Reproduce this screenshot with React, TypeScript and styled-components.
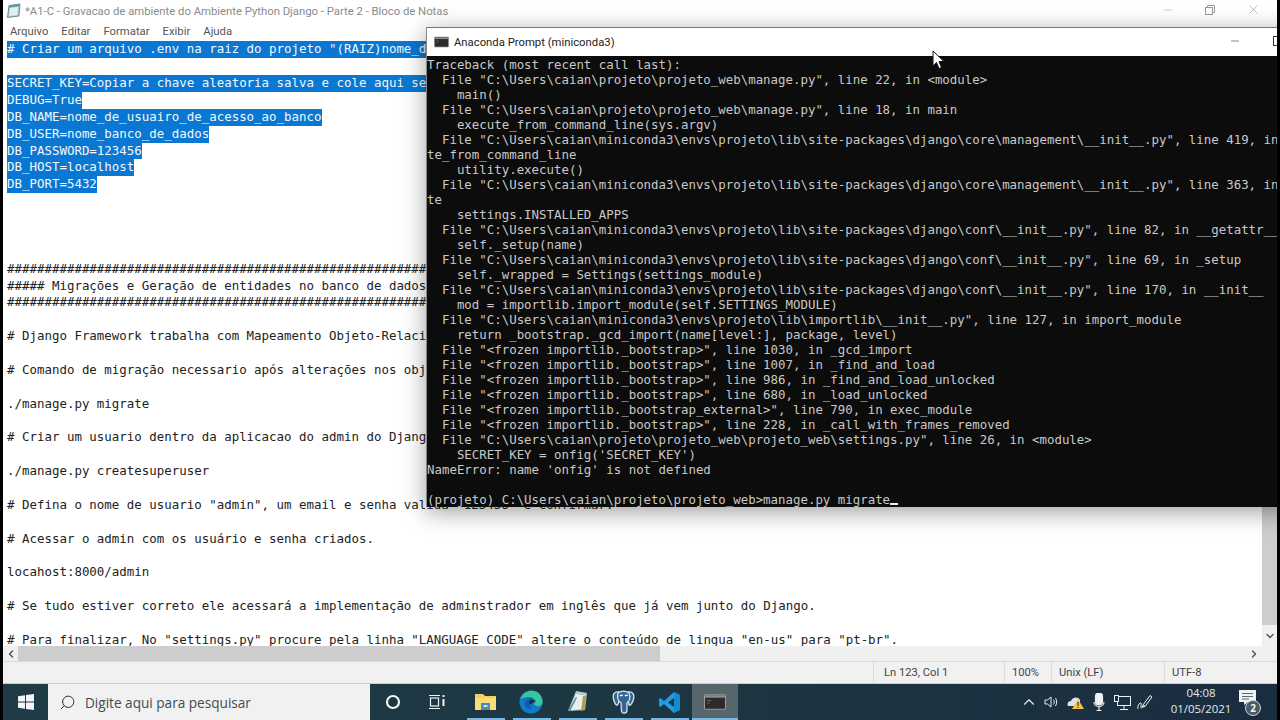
import React from 'react';
import styled, { createGlobalStyle } from 'styled-components';
import { ChevronUp, ChevronDown, ChevronLeft, ChevronRight, Search, Minus, X } from 'lucide-react';

const Global = createGlobalStyle`
  html, body { margin: 0; padding: 0; width: 1280px; height: 720px; overflow: hidden; background: #000; }
  #root { width: 1280px; height: 720px; }
`;

const uiFont = `"Roboto", "Open Sans", sans-serif`;
const barFont = `"Open Sans", "Noto Sans", sans-serif`;
const monoFont = `"DejaVu Sans Mono", "Liberation Mono", monospace`;

const Screen = styled.div`
  position: relative;
  width: 1280px;
  height: 720px;
  overflow: hidden;
  background: #000;
  display: flex;
  flex-direction: column;
`;
const Notepad = styled.section`
  flex: 1;
  min-height: 0;
  margin: 0 3px;
  background: #fff;
  display: flex;
  flex-direction: column;
  font-family: ${uiFont};
`;
const TitleBar = styled.header`
  height: 22px;
  display: flex;
  align-items: center;
  padding-left: 3px;
  gap: 3px;
  font-size: 11.3px;
  color: #8b8b8b;
  white-space: nowrap;
`;
const WinButtons = styled.div`
  margin-left: auto;
  display: flex;
  align-items: center;
  gap: 30px;
  padding: 0 16px 3px 0;
  color: #9a9a9a;
`;
const MenuBar = styled.nav`
  height: 19px;
  display: flex;
  align-items: center;
  padding-left: 7px;
  gap: 13px;
  font-size: 11.3px;
  color: #555;
`;
const Middle = styled.div`
  flex: 1;
  min-height: 0;
  display: flex;
`;
const TextArea = styled.div`
  flex: 1;
  min-width: 0;
  overflow: hidden;
  padding: 0.3px 0 0 4px;
  font-family: ${monoFont};
  font-size: 12.44px;
  line-height: 16.88px;
  color: #222;
  white-space: pre;
`;
const Line = styled.div`
  height: 16.88px;
`;
const Selected = styled.span`
  display: inline-block;
  height: 16.88px;
  background: #0a78d2;
  color: #f2f7fc;
`;
const VScroll = styled.div`
  width: 15px;
  background: #f0f0f0;
  display: flex;
  flex-direction: column;
  align-items: center;
  color: #555;
`;
const VThumb = styled.div`
  width: 100%;
  height: 300px;
  margin-top: auto;
  background: #cdcdcd;
`;
const ArrowSlot = styled.div`
  height: 21px;
  display: flex;
  align-items: center;
  justify-content: center;
`;
const HScroll = styled.div`
  height: 15px;
  background: #f0f0f0;
  display: flex;
  align-items: center;
  color: #555;
`;
const HThumb = styled.div`
  width: 642px;
  height: 100%;
  background: #cdcdcd;
`;
const HArrow = styled.div`
  width: 15px;
  display: flex;
  justify-content: center;
`;
const HRight = styled(HArrow)`
  margin-left: auto;
  margin-right: 16px;
`;
const StatusBar = styled.footer`
  height: 21px;
  flex: none;
  border-top: 1px solid #d9d9d9;
  background: #f1f1f1;
  display: flex;
  justify-content: flex-end;
  font-size: 11.2px;
  color: #444;
`;
const StatusCell = styled.div<{ $w: number; $pad?: number }>`
  width: ${p => p.$w}px;
  box-sizing: border-box;
  padding-left: ${p => p.$pad ?? 7}px;
  border-left: 1px solid #dcdcdc;
  display: flex;
  align-items: center;
  white-space: nowrap;
`;

const Terminal = styled.section`
  position: absolute;
  left: 426px;
  top: 27px;
  width: 880px;
  height: 480px;
  background: #0c0c0c;
  border-top: 1px solid #777;
  border-left: 1px solid #888;
  box-sizing: border-box;
  box-shadow: 0 5px 22px rgba(0, 0, 0, 0.38);
  display: flex;
  flex-direction: column;
`;
const TermTitle = styled.header`
  height: 28px;
  flex: none;
  background: #fff;
  display: flex;
  align-items: center;
  padding-left: 7px;
  gap: 5px;
  font-family: ${uiFont};
  font-size: 11.3px;
  color: #222;
`;
const TermButtons = styled.div`
  position: absolute;
  left: 802px;
  top: 7px;
  display: flex;
  align-items: center;
  gap: 32px;
  color: #333;
`;
const MaxBox = styled.div`
  width: 8px;
  height: 8px;
  border: 1px solid #333;
`;
const TermBody = styled.div`
  flex: 1;
  padding-top: 1px;
  overflow: hidden;
  font-family: ${monoFont};
  font-size: 12.42px;
  line-height: 15px;
  color: #c9c9c9;
  white-space: pre;
`;
const TermLine = styled.div`
  height: 15px;
  overflow: visible;
`;
const Caret = styled.span`
  display: inline-block;
  width: 7.5px;
  height: 2px;
  background: #eee;
  vertical-align: -1px;
`;
const PillarRight = styled.div`
  position: absolute;
  right: 0;
  top: 0;
  width: 3px;
  height: 720px;
  background: #000;
`;
const Cursor = styled.svg`
  position: absolute;
  left: 932px;
  top: 50px;
`;

const Taskbar = styled.footer`
  height: 37px;
  flex: none;
  margin-left: 3px;
  border-top: 1px solid #c9cdd0;
  box-sizing: border-box;
  background: linear-gradient(90deg, #1e3b46 0%, #1d3742 50%, #1a2d40 100%);
  display: flex;
  align-items: stretch;
  font-family: ${barFont};
  color: #e6eaec;
`;
const Start = styled.div`
  width: 45px;
  display: flex;
  align-items: center;
  justify-content: center;
`;
const SearchBox = styled.div`
  width: 322px;
  background: #f1f1f1;
  display: flex;
  align-items: center;
  padding-left: 11px;
  gap: 9px;
  box-sizing: border-box;
  font-size: 13.6px;
  color: #3f4c55;
`;
const FlippedSearch = styled(Search)`
  transform: scaleX(-1);
`;
const TaskSlot = styled.div<{ $active?: boolean; $running?: boolean }>`
  position: relative;
  width: 46px;
  display: flex;
  align-items: center;
  justify-content: center;
  background: ${p => (p.$active ? '#56666c' : 'transparent')};
  &::after {
    content: '';
    display: ${p => (p.$running ? 'block' : 'none')};
    position: absolute;
    bottom: 0;
    left: ${p => (p.$active ? '0' : '5px')};
    right: ${p => (p.$active ? '0' : '3px')};
    height: 2px;
    background: #76b9e4;
  }
`;
const TaskView = styled.svg`
  margin-left: -4px;
`;
const Tray = styled.div`
  margin-left: auto;
  display: flex;
  align-items: center;
`;
const TrayIcon = styled.div`
  width: 23.3px;
  display: flex;
  align-items: center;
  justify-content: center;
`;
const Clock = styled.div`
  width: 76px;
  margin: -2px 0 0 6px;
  text-align: center;
  font-size: 11.4px;
  line-height: 16px;
`;
const Notif = styled.div`
  position: relative;
  width: 41px;
  height: 100%;
  box-sizing: border-box;
  padding-top: 6px;
  display: flex;
  align-items: flex-start;
  justify-content: flex-start;
`;
const Badge = styled.span`
  position: absolute;
  left: 6px;
  top: 16px;
  width: 16px;
  height: 16px;
  border-radius: 50%;
  background: #4b5b66;
  border: 1px solid #cfd4d7;
  box-sizing: border-box;
  font-size: 10px;
  font-weight: 700;
  line-height: 14px;
  text-align: center;
  color: #f2f2f2;
`;

type NoteLine = { t?: string; s?: boolean };
const H = '#'.repeat(120);
const noteLines: NoteLine[] = [
  { t: '# Criar um arquivo .env na raiz do projeto "(RAIZ)nome_do_projeto"', s: true },
  {},
  { t: 'SECRET_KEY=Copiar a chave aleatoria salva e cole aqui sem aspas', s: true },
  { t: 'DEBUG=True', s: true },
  { t: 'DB_NAME=nome_de_usuairo_de_acesso_ao_banco', s: true },
  { t: 'DB_USER=nome_banco_de_dados', s: true },
  { t: 'DB_PASSWORD=123456', s: true },
  { t: 'DB_HOST=localhost', s: true },
  { t: 'DB_PORT=5432', s: true },
  {}, {}, {}, {},
  { t: H },
  { t: '##### Migrações e Geração de entidades no banco de dados #####' },
  { t: H },
  {},
  { t: '# Django Framework trabalha com Mapeamento Objeto-Relacional (ORM).' },
  {},
  { t: '# Comando de migração necessario após alterações nos objetos' },
  {},
  { t: './manage.py migrate' },
  {},
  { t: '# Criar um usuario dentro da aplicacao do admin do Django' },
  {},
  { t: './manage.py createsuperuser' },
  {},
  { t: '# Defina o nome de usuario "admin", um email e senha valida "123456" e confirmar.' },
  {},
  { t: '# Acessar o admin com os usuário e senha criados.' },
  {},
  { t: 'locahost:8000/admin' },
  {},
  { t: '# Se tudo estiver correto ele acessará a implementação de adminstrador em inglês que já vem junto do Django.' },
  {},
  { t: '# Para finalizar, No "settings.py" procure pela linha "LANGUAGE_CODE" altere o conteúdo de lingua "en-us" para "pt-br".' },
];

const termLines = [
  'Traceback (most recent call last):',
  '  File "C:\\Users\\caian\\projeto\\projeto_web\\manage.py", line 22, in <module>',
  '    main()',
  '  File "C:\\Users\\caian\\projeto\\projeto_web\\manage.py", line 18, in main',
  '    execute_from_command_line(sys.argv)',
  '  File "C:\\Users\\caian\\miniconda3\\envs\\projeto\\lib\\site-packages\\django\\core\\management\\__init__.py", line 419, in execu',
  'te_from_command_line',
  '    utility.execute()',
  '  File "C:\\Users\\caian\\miniconda3\\envs\\projeto\\lib\\site-packages\\django\\core\\management\\__init__.py", line 363, in execu',
  'te',
  '    settings.INSTALLED_APPS',
  '  File "C:\\Users\\caian\\miniconda3\\envs\\projeto\\lib\\site-packages\\django\\conf\\__init__.py", line 82, in __getattr__',
  '    self._setup(name)',
  '  File "C:\\Users\\caian\\miniconda3\\envs\\projeto\\lib\\site-packages\\django\\conf\\__init__.py", line 69, in _setup',
  '    self._wrapped = Settings(settings_module)',
  '  File "C:\\Users\\caian\\miniconda3\\envs\\projeto\\lib\\site-packages\\django\\conf\\__init__.py", line 170, in __init__',
  '    mod = importlib.import_module(self.SETTINGS_MODULE)',
  '  File "C:\\Users\\caian\\miniconda3\\envs\\projeto\\lib\\importlib\\__init__.py", line 127, in import_module',
  '    return _bootstrap._gcd_import(name[level:], package, level)',
  '  File "<frozen importlib._bootstrap>", line 1030, in _gcd_import',
  '  File "<frozen importlib._bootstrap>", line 1007, in _find_and_load',
  '  File "<frozen importlib._bootstrap>", line 986, in _find_and_load_unlocked',
  '  File "<frozen importlib._bootstrap>", line 680, in _load_unlocked',
  '  File "<frozen importlib._bootstrap_external>", line 790, in exec_module',
  '  File "<frozen importlib._bootstrap>", line 228, in _call_with_frames_removed',
  '  File "C:\\Users\\caian\\projeto\\projeto_web\\projeto_web\\settings.py", line 26, in <module>',
  "    SECRET_KEY = onfig('SECRET_KEY')",
  "NameError: name 'onfig' is not defined",
  '',
];

const NotepadIcon = ({ size = 16 }: { size?: number }) => (
  <svg width={size} height={size} viewBox="0 0 16 16">
    <path d="M3 2.5 L14 1 L13 13 L1.5 14.5 Z" fill="#a9ccd3" stroke="#58757c" strokeWidth="0.8" />
    <path d="M4 5 L12 4 L11.3 12 L3 13 Z" fill="#e3f0f1" />
    <path d="M3 2.5 L14 1 L13.8 3.2 L2.8 4.6 Z" fill="#5f9aa8" />
  </svg>
);
const ConsoleIcon = ({ w = 15, h = 12 }: { w?: number; h?: number }) => (
  <svg width={w} height={h} viewBox="0 0 21 15">
    <rect x="0.5" y="0.5" width="20" height="14" rx="1" fill="#2b2b2b" stroke="#9a9a9a" />
    <rect x="1" y="1" width="19" height="2.4" fill="#8c8c8c" />
    <path d="M3 6 L7 6 M3 8.5 L5.5 8.5" stroke="#666" strokeWidth="1" />
  </svg>
);

export default function App() {
  return (
    <Screen>
      <Global />
      <Notepad>
        <TitleBar>
          <NotepadIcon />
          <span>*A1-C - Gravacao de ambiente do Ambiente Python Django - Parte 2 - Bloco de Notas</span>
          <WinButtons>
            <Minus size={12} strokeWidth={1} />
            <svg width="12" height="12" viewBox="0 0 12 12" fill="none" stroke="currentColor">
              <rect x="1.5" y="3.5" width="7" height="7" />
              <path d="M3.5 3.5 V1.5 H10.5 V8.5 H8.5" />
            </svg>
            <X size={15} strokeWidth={1} />
          </WinButtons>
        </TitleBar>
        <MenuBar>
          <span>Arquivo</span>
          <span>Editar</span>
          <span>Formatar</span>
          <span>Exibir</span>
          <span>Ajuda</span>
        </MenuBar>
        <Middle>
          <TextArea>
            {noteLines.map((l, i) => (
              <Line key={i}>{l.s ? <Selected>{l.t}</Selected> : l.t}</Line>
            ))}
          </TextArea>
          <VScroll>
            <VThumb />
            <ArrowSlot>
              <ChevronDown size={12} strokeWidth={3} />
            </ArrowSlot>
          </VScroll>
        </Middle>
        <HScroll>
          <HArrow>
            <ChevronLeft size={12} strokeWidth={3} />
          </HArrow>
          <HThumb />
          <HRight>
            <ChevronRight size={12} strokeWidth={3} />
          </HRight>
        </HScroll>
        <StatusBar>
          <StatusCell $w={131} $pad={10}>Ln 123, Col 1</StatusCell>
          <StatusCell $w={47}>100%</StatusCell>
          <StatusCell $w={113}>Unix (LF)</StatusCell>
          <StatusCell $w={113}>UTF-8</StatusCell>
        </StatusBar>
      </Notepad>

      <Taskbar>
        <Start>
          <svg width="16" height="16" viewBox="0 0 16 16" fill="#f4f6f7">
            <path d="M0 2.2 L7 1.2 V7.5 H0 Z M8 1 L16 0 V7.5 H8 Z M0 8.5 H7 V14.8 L0 13.8 Z M8 8.5 H16 V16 L8 15 Z" />
          </svg>
        </Start>
        <SearchBox>
          <FlippedSearch size={17} strokeWidth={1.4} color="#333" />
          <span>Digite aqui para pesquisar</span>
        </SearchBox>
        <TaskSlot>
          <svg width="16" height="16" viewBox="0 0 16 16" fill="none" stroke="#f2f4f5" strokeWidth="2.2">
            <circle cx="8" cy="8" r="6" />
          </svg>
        </TaskSlot>
        <TaskSlot>
          <TaskView width="17" height="16" viewBox="0 0 17 16" fill="none" stroke="#eef1f2" strokeWidth="1.2">
            <path d="M0 1.5 H11 M0 14.5 H11" />
            <rect x="1.5" y="4" width="8" height="8" />
            <path d="M14.5 1 V3 M14.5 5 V12" strokeWidth="2" />
          </TaskView>
        </TaskSlot>
        <TaskSlot $running>
          <svg width="21" height="18" viewBox="0 0 21 18">
            <path d="M0 1 H8 L10 3 H21 V17 H0 Z" fill="#f5cf5a" />
            <path d="M0 5 H21 V17 H0 Z" fill="#f9dd7a" />
            <path d="M6 10 H15 V17 H6 Z" fill="#3f8ec9" />
            <path d="M8.5 12 H12.5 V14 H8.5 Z" fill="#f9dd7a" />
          </svg>
        </TaskSlot>
        <TaskSlot $running>
          <svg width="24" height="24" viewBox="0 0 24 24">
            <circle cx="12" cy="12" r="11.5" fill="#1478c8" />
            <path d="M1 10 C3 2 11 0 15 1 C21 2 24 8 23.5 13 C23 17 16 17 15 14 C18 12 15 7 10 7 C6 7 2 8 1 10 Z" fill="#35c89b" />
            <path d="M6 14 C6 9 12 7 15 9 C10 10 10 16 13 19 C9 19 6 17 6 14 Z" fill="#0d5ca8" />
            <path d="M10 13 C10 9 16 9 17 12 C14 11 13 13 13 15 Z" fill="#1d2f3a" />
          </svg>
        </TaskSlot>
        <TaskSlot $running>
          <svg width="22" height="24" viewBox="0 0 22 24">
            <path d="M10 1 L21 3 L19 20 L2 21 Z" fill="#aecfcf" />
            <path d="M10 4 L19 5.5 L17.5 19 L5 20 Z" fill="#e6f0ee" />
            <path d="M17 6 L20 6 L18.5 20 L15 21 Z" fill="#b39a57" />
            <path d="M2 21 L10 7 L11 8 L4 21 Z" fill="#5f8f8c" />
          </svg>
        </TaskSlot>
        <TaskSlot $running>
          <svg width="23" height="25" viewBox="0 0 23 25" fill="none" stroke="#d6e4ec" strokeWidth="1.3">
            <path d="M7 2 C2 1 0.5 5 1.5 9 C2.5 13 4 16 5.5 15 C6.5 14 6.5 12 7 11" fill="#336791" />
            <path d="M16 2 C21 1 22.5 5 21.5 9 C20.5 13 18.5 16 17 15 L16.5 12" fill="#336791" />
            <path d="M6 3 C9 0.5 14 0.5 17 3 C18.5 7 17.5 11 15 13 L15 20 C15 24 10 24 9.5 21 L9 13 C6 11 5 7 6 3 Z" fill="#336791" />
            <path d="M8 6 C9 5 10 5 10.5 6 M13 6 C14 5 15 5 15.5 6" stroke="#fff" />
          </svg>
        </TaskSlot>
        <TaskSlot $running>
          <svg width="23" height="23" viewBox="0 0 23 23">
            <path d="M16 1 L22 4 V19 L16 22 L6 13 L2.5 16 L1 15 V8 L2.5 7 L6 10 Z M16 7 L10 11.5 L16 16 Z" fill="#1f9ce6" fillRule="evenodd" />
            <path d="M16 1 L22 4 V19 L16 22 Z" fill="#1481c8" opacity="0.7" />
          </svg>
        </TaskSlot>
        <TaskSlot $active $running>
          <ConsoleIcon w={22} h={16} />
        </TaskSlot>
        <Tray>
          <TrayIcon>
            <ChevronUp size={18} strokeWidth={1.5} />
          </TrayIcon>
          <TrayIcon>
            <svg width="16" height="14" viewBox="0 0 16 14" fill="none" stroke="#e8ecee" strokeWidth="1">
              <path d="M1 5 H3.5 L7 2 V12 L3.5 9 H1 Z" />
              <path d="M9.5 4.5 C10.5 6 10.5 8 9.5 9.5 M11.5 3 C13 5.5 13 8.5 11.5 11" />
            </svg>
          </TrayIcon>
          <TrayIcon>
            <svg width="17" height="14" viewBox="0 0 17 14">
              <path d="M1 11 C-0.5 8 2 5.5 4 6 C5 2 11 1 13 5 L13 11 Z" fill="#dfe3e5" />
              <path d="M11 4 L17 14 H5 Z" fill="#f1c24b" />
              <path d="M11 7 V11 M11 12 V13" stroke="#333" strokeWidth="1.1" />
            </svg>
          </TrayIcon>
          <TrayIcon>
            <svg width="12" height="18" viewBox="0 0 12 18" fill="none" stroke="#eef0f1" strokeWidth="1.2">
              <rect x="2.5" y="0" width="7" height="12" rx="3.5" fill="#eef0f1" />
              <path d="M1 9 C1 15 11 15 11 9 M6 14 V17 M3.5 17.5 H8.5" />
            </svg>
          </TrayIcon>
          <TrayIcon>
            <svg width="17" height="15" viewBox="0 0 17 15" fill="none" stroke="#eef0f1" strokeWidth="1">
              <rect x="3.5" y="1.5" width="13" height="9" />
              <rect x="0.5" y="0.5" width="4" height="6" fill="#1a2d40" />
              <path d="M10 11 V14 M6 14.5 H14" />
            </svg>
          </TrayIcon>
          <TrayIcon>
            <svg width="16" height="16" viewBox="0 0 16 16" fill="none" stroke="#eef0f1" strokeWidth="1">
              <path d="M6 11 L13 1.5 L15 3 L8 12.5 L5.5 13 Z" />
              <path d="M1 15 C0 12 3 8 4 9 C5 10 3 14 4.5 14 C6 14 6 11 8 12" />
            </svg>
          </TrayIcon>
          <Clock>
            04:08
            <br />
            01/05/2021
          </Clock>
          <Notif>
            <svg width="17" height="15" viewBox="0 0 17 15" fill="#eef0f1">
              <path d="M0 0 H17 V12 H9 L5 15 V12 H0 Z" />
              <path d="M3 3.5 H14 M3 6.5 H14 M3 9 H10" stroke="#5a6872" strokeWidth="1" />
            </svg>
            <Badge>2</Badge>
          </Notif>
        </Tray>
      </Taskbar>

      <Terminal>
        <TermTitle>
          <ConsoleIcon />
          <span>Anaconda Prompt (miniconda3)</span>
          <TermButtons>
            <Minus size={12} strokeWidth={1.2} />
            <MaxBox />
          </TermButtons>
        </TermTitle>
        <TermBody>
          {termLines.map((l, i) => (
            <TermLine key={i}>{l}</TermLine>
          ))}
          <TermLine>
            {'(projeto) C:\\Users\\caian\\projeto\\projeto_web>manage.py migrate'}
            <Caret />
          </TermLine>
        </TermBody>
      </Terminal>
      <PillarRight />
      <Cursor width="14" height="20" viewBox="0 0 14 20">
        <path d="M1 1 L1 16 L4.5 12.5 L7 18.5 L9.5 17.5 L7 11.5 L12 11.5 Z" fill="#fff" stroke="#111" strokeWidth="1" />
      </Cursor>
    </Screen>
  );
}
